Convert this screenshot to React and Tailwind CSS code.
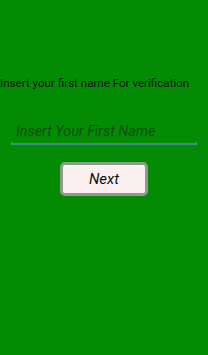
export default function App() {
  return (
    <div className="w-[208px] h-[355px] bg-[#038c03] flex flex-col" style={{ fontFamily: '"Roboto", "Liberation Sans", sans-serif' }}>
      <p className="mt-[75px] text-[11.6px] leading-[16px] text-[#111] whitespace-nowrap">Insert your first name For verification</p>

      <div className="mt-[32px] mx-[11px] relative">
        <p className="pl-[5px] text-[14.4px] leading-[18px] italic text-[#0c4f0c] whitespace-nowrap">Insert Your First Name</p>
        <div className="mt-[2px] h-[2px] bg-[#3f8f80]" />
        <div className="absolute left-0 bottom-0 w-[1px] h-[4px] bg-[#3f8f80]" />
        <div className="absolute right-0 bottom-0 w-[1px] h-[4px] bg-[#3f8f80]" />
      </div>

      <div className="mt-[17px] flex justify-center">
        <button className="w-[88px] h-[34px] rounded-[5px] border-[3px] border-[#8f9a8f] bg-[#fdf0f1] text-[15px] italic text-[#111] flex items-center justify-center">
          Next
        </button>
      </div>
    </div>
  );
}
